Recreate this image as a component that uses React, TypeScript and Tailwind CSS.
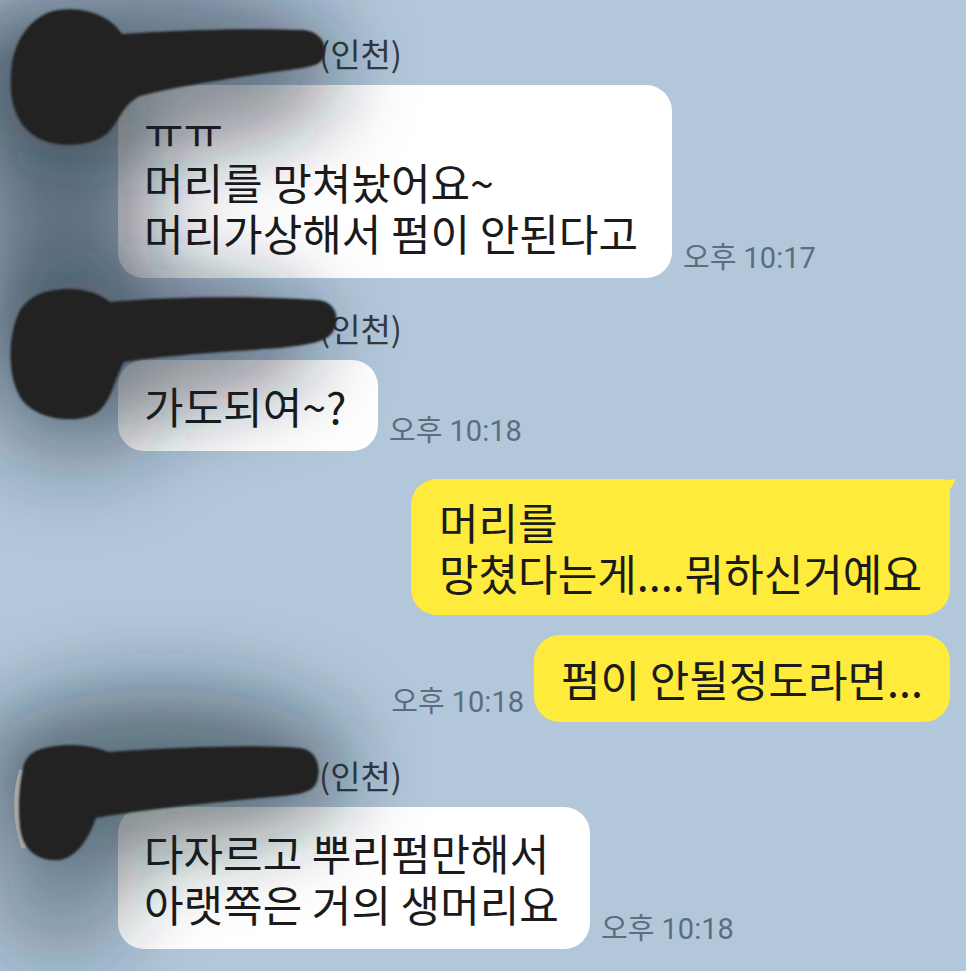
import type { ReactNode } from "react";

// chat bubbles from the other side (white)
function Received({
  width,
  children,
  time,
  gapTop,
}: {
  width: string;
  children: ReactNode;
  time: string;
  gapTop: string;
}) {
  return (
    <div className={`pl-[118px] ${gapTop}`}>
      <div className="pl-[201px] text-[33px] leading-[44px] text-[#333a40]">(인천)</div>
      <div className="mt-[10px] flex items-end gap-[11px]">
        <div
          className={`${width} whitespace-nowrap rounded-[26px] bg-white px-[26px] py-[20px] text-[43px] leading-[51px] text-[#1b1b1b]`}
        >
          {children}
        </div>
        <span className="mb-[5px] whitespace-nowrap font-['Roboto','Noto_Sans_CJK_KR',sans-serif] text-[29px] leading-none text-[#5b6d7e]">
          {time}
        </span>
      </div>
    </div>
  );
}

export default function App() {
  return (
    <div className="relative h-[971px] w-[966px] overflow-hidden bg-[#b2c7da] font-['Noto_Sans_CJK_KR','Noto_Sans',sans-serif]">
      <div className="flex flex-col pt-[31px]">
        <Received width="w-[554px]" time="오후 10:17" gapTop="">
          <div>ㅠㅠ</div>
          <div>머리를 망쳐놨어요~</div>
          <div>머리가상해서 펌이 안된다고</div>
        </Received>

        <Received width="w-[260px]" time="오후 10:18" gapTop="mt-[28px]">
          가도되여~?
        </Received>

        {/* my messages (yellow) */}
        <div className="mt-[28px] flex flex-col items-end gap-[20px] pr-[16px]">
          <div className="relative w-[539px] whitespace-nowrap rounded-[26px] rounded-tr-[8px] bg-[#ffeb3c] px-[28px] py-[17px] text-[43px] leading-[51px] text-[#1b1b1b]">
            <div>머리를</div>
            <div>망쳤다는게....뭐하신거예요</div>
            <svg
              className="absolute right-[-6px] top-[0px]"
              width="18"
              height="18"
              viewBox="0 0 18 18"
            >
              <path d="M0 2 L18 0 L10 14 Z" fill="#ffeb3c" />
            </svg>
          </div>
          <div className="flex items-end gap-[10px]">
            <span className="mb-[5px] whitespace-nowrap font-['Roboto','Noto_Sans_CJK_KR',sans-serif] text-[29px] leading-none text-[#5b6d7e]">
              오후 10:18
            </span>
            <div className="w-[416px] whitespace-nowrap rounded-[26px] bg-[#ffeb3c] px-[27px] py-[18px] text-[43px] leading-[51px] text-[#1b1b1b]">
              펌이 안될정도라면...
            </div>
          </div>
        </div>

        <Received width="w-[472px]" time="오후 10:18" gapTop="mt-[31px]">
          <div>다자르고 뿌리펌만해서</div>
          <div>아랫쪽은 거의 생머리요</div>
        </Received>
      </div>

      {/* redaction scribbles drawn over the names and avatars */}
      <svg
        className="pointer-events-none absolute left-0 top-0"
        width="966"
        height="971"
        viewBox="0 0 966 971"
      >
        <defs>
          <filter id="halo" x="-50%" y="-50%" width="200%" height="200%">
            <feGaussianBlur stdDeviation="40" />
          </filter>
          <filter id="soft" x="-10%" y="-10%" width="120%" height="120%">
            <feGaussianBlur stdDeviation="1.2" />
          </filter>
        </defs>
        <g filter="url(#halo)" fill="#1a2530">
          <ellipse cx="130" cy="70" rx="210" ry="90" opacity="0.5" />
          <ellipse cx="60" cy="200" rx="90" ry="150" opacity="0.5" />
          <ellipse cx="140" cy="340" rx="180" ry="70" opacity="0.5" />
          <ellipse cx="70" cy="420" rx="90" ry="50" opacity="0.35" />
          <ellipse cx="160" cy="770" rx="190" ry="80" opacity="0.55" />
          <ellipse cx="60" cy="880" rx="80" ry="80" opacity="0.35" />
        </g>
        <path
          d="M22 770 C 15 790, 14 820, 24 848"
          stroke="#aaa7a0"
          strokeWidth="5"
          fill="none"
        />
        <g fill="#222222" filter="url(#soft)">
          <path d="M58 10 C 88 6, 112 18, 122 34 C 180 30, 250 28, 302 30 C 322 31, 330 48, 322 60 C 316 68, 300 68, 260 74 C 220 80, 170 88, 140 96 C 124 104, 120 118, 112 128 C 100 146, 62 150, 38 138 C 12 124, 8 92, 12 64 C 16 36, 34 14, 58 10 Z" />
          <path d="M55 290 C 82 286, 100 294, 110 302 C 170 296, 260 296, 318 300 C 336 302, 340 318, 334 330 C 328 342, 312 344, 280 348 C 220 352, 160 356, 124 362 C 114 380, 112 400, 98 412 C 80 424, 40 422, 22 400 C 6 376, 8 334, 20 310 C 30 296, 42 292, 55 290 Z" />
          <path d="M45 748 C 70 742, 95 746, 108 752 C 170 748, 250 744, 300 748 C 318 750, 322 770, 316 784 C 310 794, 296 795, 260 798 C 200 804, 140 810, 96 818 C 90 834, 80 856, 60 860 C 38 862, 22 850, 20 826 C 18 806, 20 780, 24 764 C 28 754, 36 750, 45 748 Z" />
        </g>
      </svg>
    </div>
  );
}
